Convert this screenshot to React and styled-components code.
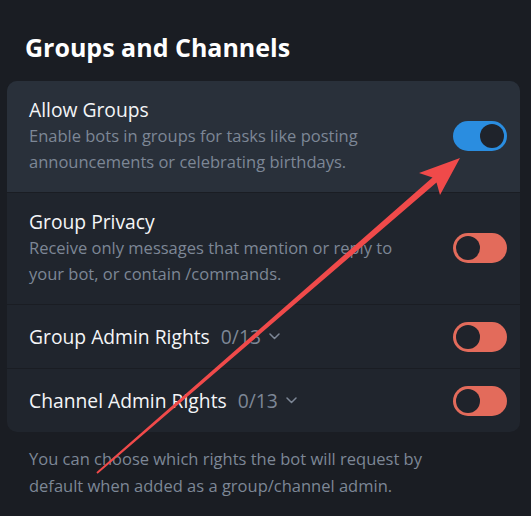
import React from "react";
import styled, { createGlobalStyle } from "styled-components";

const Global = createGlobalStyle`
  html, body { margin: 0; padding: 0; background: #1a1d23; }
  body { font-family: "Open Sans", "Noto Sans", sans-serif; -webkit-font-smoothing: antialiased; }
`;

const Page = styled.div`
  position: relative;
  width: 531px;
  height: 516px;
  overflow: hidden;
  background: #1a1d23;
  padding: 32px 11px 0 7px;
  box-sizing: border-box;
`;

const Title = styled.h2`
  margin: 0 0 19px 18px;
  font-size: 25px;
  line-height: 30px;
  font-weight: 700;
  color: #ffffff;
`;

const Card = styled.div`
  background: #20252d;
  border-radius: 10px;
  overflow: hidden;
  display: flex;
  flex-direction: column;
`;

const Row = styled.div`
  display: flex;
  align-items: center;
  gap: 16px;
  box-sizing: border-box;
  height: ${(p) => (p.$compact ? "64px" : "auto")};
  padding: ${(p) => (p.$compact ? "0 13px 0 22px" : "16px 13px 17px 22px")};
  background: ${(p) => (p.$hover ? "#29303a" : "transparent")};
  & + & { border-top: 1px solid #1a1d23; }
`;

const Text = styled.div`
  flex: 1;
  min-width: 0;
`;

const Label = styled.div`
  display: flex;
  align-items: center;
  height: 26px;
  font-size: 19.3px;
  line-height: 26px;
  color: #f4f5f7;
`;

const Count = styled.span`
  display: inline-flex;
  align-items: center;
  gap: 8px;
  margin-left: 11px;
  color: #7d8796;
`;

const Desc = styled.div`
  font-size: 16.5px;
  line-height: 26px;
  color: #7d8796;
`;

const Toggle = styled.div`
  flex: none;
  width: 54px;
  height: 30px;
  border-radius: 15px;
  box-sizing: border-box;
  padding: 3px;
  display: flex;
  justify-content: ${(p) => (p.$on ? "flex-end" : "flex-start")};
  background: ${(p) => (p.$on ? "#2a8de0" : "#e36b5b")};
`;

const Knob = styled.div`
  width: 24px;
  height: 24px;
  border-radius: 50%;
  background: #1f232b;
`;

const Footer = styled.p`
  margin: 13px 0 0 22px;
  font-size: 16.5px;
  line-height: 27px;
  color: #7d8796;
`;

const Overlay = styled.svg`
  position: absolute;
  left: 0;
  top: 0;
  pointer-events: none;
`;

const Chevron = () => (
  <svg width="11" height="7" viewBox="0 0 11 7" fill="none">
    <path d="M1 1l4.5 4.5L10 1" stroke="#7d8796" strokeWidth="1.5" strokeLinecap="round" strokeLinejoin="round" />
  </svg>
);

export default function App() {
  return (
    <>
      <Global />
      <Page>
        <Title>Groups and Channels</Title>
        <Card>
          <Row $hover>
            <Text>
              <Label>Allow Groups</Label>
              <Desc>
                Enable bots in groups for tasks like posting
                <br />
                announcements or celebrating birthdays.
              </Desc>
            </Text>
            <Toggle $on>
              <Knob />
            </Toggle>
          </Row>
          <Row>
            <Text>
              <Label>Group Privacy</Label>
              <Desc>
                Receive only messages that mention or reply to
                <br />
                your bot, or contain /commands.
              </Desc>
            </Text>
            <Toggle>
              <Knob />
            </Toggle>
          </Row>
          <Row $compact>
            <Text>
              <Label>
                Group Admin Rights
                <Count>
                  0/13 <Chevron />
                </Count>
              </Label>
            </Text>
            <Toggle>
              <Knob />
            </Toggle>
          </Row>
          <Row $compact>
            <Text>
              <Label>
                Channel Admin Rights
                <Count>
                  0/13 <Chevron />
                </Count>
              </Label>
            </Text>
            <Toggle>
              <Knob />
            </Toggle>
          </Row>
        </Card>
        <Footer>
          You can choose which rights the bot will request by
          <br />
          default when added as a group/channel admin.
        </Footer>
        <Overlay width="531" height="516" viewBox="0 0 531 516">
          <polygon
            fill="#f04a4a"
            points="96.4,472.2 97.6,473.8 436.5,182.5 440,195 460,158 419,173 432.5,177.5"
          />
        </Overlay>
      </Page>
    </>
  );
}
